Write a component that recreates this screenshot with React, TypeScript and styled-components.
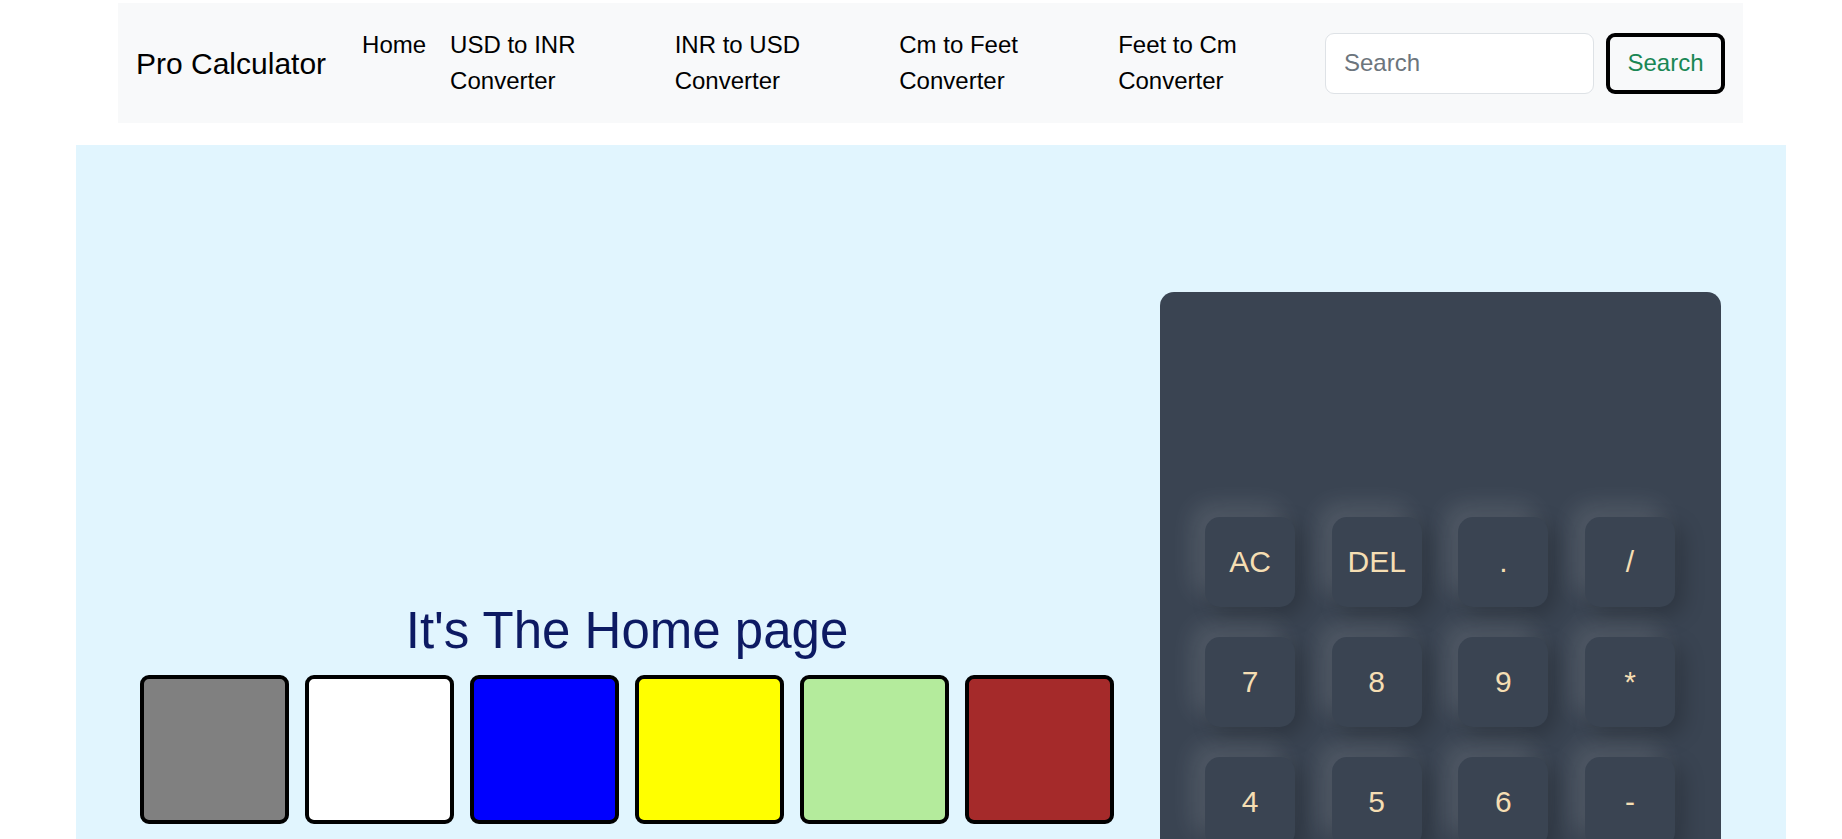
import React from "react";
import styled, { createGlobalStyle } from "styled-components";

const Global = createGlobalStyle`
  html, body { margin: 0; padding: 0; background: #ffffff; }
  body { font-family: "Liberation Sans", Arial, sans-serif; overflow: hidden; }
  * { box-sizing: border-box; }
`;

const Page = styled.div`
  padding-top: 3px;
  width: 1842px;
`;

const Navbar = styled.nav`
  margin: 0 99px 0 118px;
  background: #f8f9fa;
  padding: 12px 18px 12px 18px;
  display: flex;
  align-items: center;
`;

const Brand = styled.a`
  font-size: 30px;
  line-height: 45px;
  color: #000;
  text-decoration: none;
  margin-right: 24px;
  white-space: nowrap;
  flex-shrink: 0;
`;

const Collapse = styled.div`
  flex: 1 1 auto;
  display: flex;
  align-items: center;
  min-width: 0;
`;

const NavList = styled.ul`
  list-style: none;
  margin: 0 auto 0 0;
  padding: 0;
  display: flex;
  min-width: 0;
`;

const NavItem = styled.li`
  flex: 0 1 auto;
`;

const NavLink = styled.a`
  display: block;
  padding: 12px 12px;
  font-size: 24px;
  line-height: 36px;
  color: #000;
  text-decoration: none;
`;

const SearchForm = styled.form`
  display: flex;
  align-items: stretch;
  flex-shrink: 0;
`;

const SearchInput = styled.input`
  width: 269px;
  height: 61px;
  margin-right: 12px;
  padding: 9px 18px;
  font-family: "Liberation Sans", Arial, sans-serif;
  font-size: 24px;
  line-height: 36px;
  color: #212529;
  background: #ffffff;
  border: 1.5px solid #dee2e6;
  border-radius: 9px;
  outline: none;
  &::placeholder { color: #6c757d; }
`;

const SearchButton = styled.button`
  width: 119px;
  height: 61px;
  padding: 0;
  font-family: "Liberation Sans", Arial, sans-serif;
  font-size: 24px;
  line-height: 36px;
  color: #198754;
  background: transparent;
  border: 4px solid #000000;
  border-radius: 9px;
`;

const Section = styled.main`
  margin: 22px 56px 0 76px;
  background: #e1f5fe;
  padding: 147px 65px 40px 64px;
`;

const Row = styled.div`
  display: flex;
  align-items: center;
  gap: 46px;
`;

const LeftColumn = styled.div`
  width: 974px;
  display: flex;
  flex-direction: column;
  align-items: center;
`;

const Heading = styled.h1`
  margin: 0 0 14px;
  font-size: 51px;
  line-height: 61px;
  font-weight: 400;
  color: #0d1a63;
`;

const Swatches = styled.div`
  display: flex;
  gap: 16px;
`;

const Swatch = styled.div<{ $color: string }>`
  width: 149px;
  height: 149px;
  border: 4px solid #000;
  border-radius: 9px;
  background: ${(p) => p.$color};
`;

const Calculator = styled.div`
  width: 561px;
  flex-shrink: 0;
  background: #3a4452;
  border-radius: 14px;
  padding: 45px 46px 45px 45px;
`;

const Display = styled.div`
  height: 180px;
`;

const Keys = styled.div`
  display: grid;
  grid-template-columns: repeat(4, 90px);
  justify-content: space-between;
  row-gap: 30px;
`;

const Key = styled.button`
  width: 90px;
  height: 90px;
  border: 0;
  border-radius: 15px;
  background: #3a4452;
  color: #f5deb3;
  font-family: "Liberation Sans", Arial, sans-serif;
  font-size: 30px;
  box-shadow: -12px -12px 24px rgba(255, 255, 255, 0.12),
    8px 8px 22px rgba(0, 0, 0, 0.22);
  padding: 0;
`;

const links = [
  "Home",
  "USD to INR Converter",
  "INR to USD Converter",
  "Cm to Feet Converter",
  "Feet to Cm Converter",
];

const colors = ["#808080", "#ffffff", "#0000ff", "#ffff00", "#b4eb9c", "#a52a2a"];

const keys = ["AC", "DEL", ".", "/", "7", "8", "9", "*", "4", "5", "6", "-", "1", "2", "3", "+", "00", "0", "="];

export default function App() {
  return (
    <Page>
      <Global />
      <Navbar>
        <Brand href="#">Pro Calculator</Brand>
        <Collapse>
          <NavList>
            {links.map((l) => (
              <NavItem key={l}>
                <NavLink href="#">{l}</NavLink>
              </NavItem>
            ))}
          </NavList>
          <SearchForm onSubmit={(e) => e.preventDefault()}>
            <SearchInput type="search" placeholder="Search" />
            <SearchButton type="submit">Search</SearchButton>
          </SearchForm>
        </Collapse>
      </Navbar>
      <Section>
        <Row>
          <LeftColumn>
            <Heading>It's The Home page</Heading>
            <Swatches>
              {colors.map((c) => (
                <Swatch key={c} $color={c} />
              ))}
            </Swatches>
          </LeftColumn>
          <Calculator>
            <Display />
            <Keys>
              {keys.map((k, i) => (
                <Key key={i}>{k}</Key>
              ))}
            </Keys>
          </Calculator>
        </Row>
      </Section>
    </Page>
  );
}
